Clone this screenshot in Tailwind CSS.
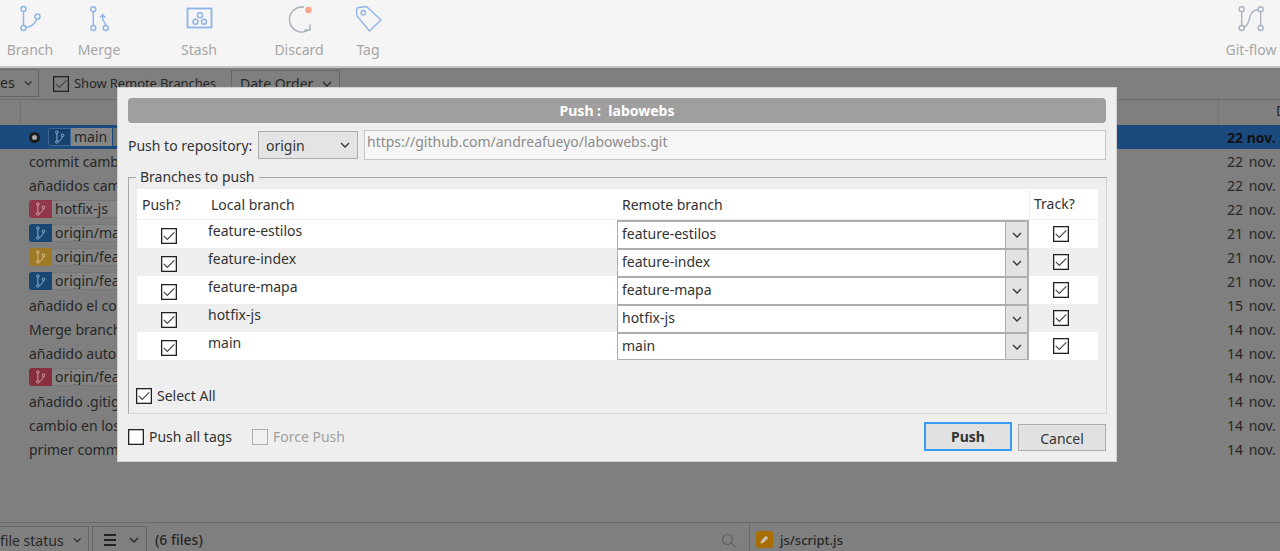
<!DOCTYPE html>
<html lang="es">
<head>
    <meta charset="UTF-8">
    <title>Push : labowebs</title>
    <script src="https://cdn.jsdelivr.net/npm/@tailwindcss/browser@4"></script>
</head>
<body class="h-[551px] w-[1280px] overflow-hidden flex flex-col bg-[#7f7f7f] font-['Noto_Sans',sans-serif] text-[14px] text-[#333]">

<!-- shared icons -->
<svg class="hidden">
    <symbol id="chev" viewBox="0 0 10 6"><path d="M1 1l4 4 4-4" fill="none" stroke="currentColor" stroke-width="1.3"/></symbol>
    <symbol id="box" viewBox="0 0 16 16"><rect x=".65" y=".65" width="14.7" height="14.7" fill="none" stroke="#222" stroke-width="1.3"/></symbol>
    <symbol id="check" viewBox="0 0 16 16"><rect x=".65" y=".65" width="14.7" height="14.7" fill="none" stroke="#222" stroke-width="1.3"/><path d="M2.800 7.800l3.500 3.500 7-7" fill="none" stroke="#444" stroke-width="1.2"/></symbol>
    <symbol id="branch" viewBox="0 0 12 16"><g fill="none" stroke="currentColor" stroke-width="1.1"><circle cx="3" cy="2.500" r="1.500"/><circle cx="3" cy="13.500" r="1.500"/><circle cx="9.500" cy="6" r="1.500"/><path d="M3 4v8M4.400 13C7 12.500 8.800 10 9.200 7.500"/></g></symbol>
</svg>

<!-- Toolbar -->
<header class="h-[68px] shrink-0 flex gap-[9px] bg-[#f5f5f5] border-b-2 border-[#c4c4c4] text-[#a6a6a6]">
    <div class="w-[60px] flex flex-col items-center">
        <svg class="mt-[4px] h-[32px] w-[32px] text-[#8fb4e6]" viewBox="0 0 32 32" fill="none" stroke="currentColor" stroke-width="1.4"><circle cx="9.500" cy="5" r="2.500"/><circle cx="9.500" cy="24" r="2.500"/><circle cx="23.500" cy="12.500" r="2.500"/><path d="M9.500 7.500v14M12 23.500c5-.5 9-4 11-8.500"/></svg>
        <span class="mt-[3px]">Branch</span>
    </div>
    <div class="w-[60px] flex flex-col items-center">
        <svg class="mt-[4px] h-[32px] w-[32px] text-[#8fb4e6]" viewBox="0 0 32 32" fill="none" stroke="currentColor" stroke-width="1.4"><circle cx="10.300" cy="5.300" r="2.500"/><circle cx="10.300" cy="24" r="2.500"/><circle cx="22.700" cy="24" r="2.500"/><path d="M10.300 7.800v13.700M22.700 21.500c0-3-3-4-3-6.500V11M17.200 13.500l2.500-3 2.500 3"/></svg>
        <span class="mt-[3px]">Merge</span>
    </div>
    <div class="w-[60px] ml-[31px] flex flex-col items-center">
        <svg class="mt-[4px] h-[32px] w-[32px] text-[#8fb4e6]" viewBox="0 0 32 32" fill="none" stroke="currentColor" stroke-width="1.4"><rect x="4.500" y="4.500" width="24" height="19" stroke-width="1.800"/><circle cx="17" cy="11.300" r="2.500"/><circle cx="12.500" cy="17.700" r="2.500"/><circle cx="21" cy="17.700" r="2.500"/></svg>
        <span class="mt-[3px]">Stash</span>
    </div>
    <div class="w-[60px] ml-[31px] flex flex-col items-center">
        <svg class="mt-[4px] h-[32px] w-[32px]" viewBox="0 0 32 32" fill="none" stroke="#a9b0ba" stroke-width="1.4"><path d="M21 3.200A12.500 12.500 0 1 0 26.500 25.500M27 20.500v5.500h-5.500"/><circle cx="25.500" cy="6" r="3.200" fill="#f9a391" stroke="none"/></svg>
        <span class="mt-[3px]">Discard</span>
    </div>
    <div class="w-[60px] flex flex-col items-center">
        <svg class="mt-[4px] h-[32px] w-[32px] text-[#8fb4e6]" viewBox="0 0 32 32" fill="none" stroke="currentColor" stroke-width="1.4"><path d="M4.500 6Q4.500 4 6.500 3.500L14.500 2.500 29 16 17.500 27 5 12z"/><circle cx="11.300" cy="8.700" r="2.200"/></svg>
        <span class="mt-[3px]">Tag</span>
    </div>
    <div class="w-[58px] ml-auto flex flex-col items-center">
        <svg class="mt-[4px] h-[32px] w-[32px] text-[#a9b3c2]" viewBox="0 0 32 32" fill="none" stroke="currentColor" stroke-width="1.4"><circle cx="6.700" cy="5.300" r="2.500"/><circle cx="6.700" cy="24" r="2.500"/><circle cx="25.700" cy="5.300" r="2.500"/><circle cx="25.700" cy="24" r="2.500"/><path d="M6.700 7.800v13.700M25.700 7.800v13.700M9 23c8-2 2-16 14.500-17.500"/></svg>
        <span class="mt-[3px]">Git-flow</span>
    </div>
</header>

<!-- Main (dimmed behind the dialog) -->
<main class="relative flex-1 flex flex-col min-h-0 text-[#272727]">
    <div class="h-[31px] shrink-0 flex items-center">
        <div class="h-[28px] w-[39px] -mt-[2px] border border-[#666] border-l-0 flex items-center justify-end gap-[9px] pr-[6px]">
            <span>es</span>
            <svg class="h-[6px] w-[10px]"><use href="#chev"/></svg>
        </div>
        <svg class="ml-[14px] h-[16px] w-[16px]"><use href="#check"/></svg>
        <span class="ml-[5px] w-[157px] whitespace-nowrap text-[13px] tracking-[-0.1px]">Show Remote Branches</span>
        <div class="h-[28px] w-[109px] border border-[#666] flex items-center justify-between pl-[8px] pr-[7px]">
            <span>Date Order</span>
            <svg class="h-[6px] w-[10px]"><use href="#chev"/></svg>
        </div>
    </div>

    <div class="h-[26px] shrink-0 flex border-t border-[#6b6b6b]">
        <div class="w-[21px] shrink-0 border-r border-[#737373]"></div>
        <div class="w-[1198px] shrink-0 border-r border-[#737373]"></div>
        <span class="ml-[57px] shrink-0 whitespace-nowrap">Date</span>
    </div>

    <div class="flex-1 min-h-0">
        <div class="h-[24px] flex items-center bg-[#1b4b7e]">
            <span class="ml-[29px] h-[5px] w-[5px] box-content border-[3px] border-[#1c1c1c] rounded-full bg-[#aaa]"></span>
            <span class="ml-[8px] h-[18px] w-[23px] rounded-l-[3px] border border-[#3a6794] bg-[#17406c] text-[#8fb0d2] flex items-center justify-center"><svg class="h-[14px] w-[11px]"><use href="#branch"/></svg></span>
            <span class="h-[18px] w-[41px] pl-[3px] leading-[17px] bg-[#858585]">main</span>
            <span class="ml-[1px] h-[18px] w-[20px] bg-[#6f6f6f]"></span>
            <span class="ml-auto w-[53px] font-bold text-[#111] whitespace-nowrap overflow-hidden">22 nov. 2021</span>
        </div>
        <div class="h-[24px] flex items-center"><span class="ml-[29px]">commit cambios</span><span class="ml-auto w-[53px] whitespace-nowrap overflow-hidden [word-spacing:2px]">22 nov. 2021</span></div>
        <div class="h-[24px] flex items-center"><span class="ml-[29px]">añadidos cambios</span><span class="ml-auto w-[53px] whitespace-nowrap overflow-hidden [word-spacing:2px]">22 nov. 2021</span></div>
        <div class="h-[24px] flex items-center"><span class="ml-[29px] h-[18px] w-[23px] rounded-l-[3px] bg-[#92364b] text-[#d6a6b0] flex items-center justify-center"><svg class="h-[14px] w-[11px]"><use href="#branch"/></svg></span><span class="h-[18px] w-[70px] pl-[3px] leading-[16px] border-y border-[#777] bg-[#858585] whitespace-nowrap">hotfix-js</span><span class="ml-auto w-[53px] whitespace-nowrap overflow-hidden [word-spacing:2px]">22 nov. 2021</span></div>
        <div class="h-[24px] flex items-center"><span class="ml-[29px] h-[18px] w-[23px] rounded-l-[3px] bg-[#1a4673] text-[#8fb0d2] flex items-center justify-center"><svg class="h-[14px] w-[11px]"><use href="#branch"/></svg></span><span class="h-[18px] w-[70px] pl-[3px] leading-[16px] border-y border-[#777] bg-[#858585] whitespace-nowrap overflow-hidden">origin/main</span><span class="ml-auto w-[53px] whitespace-nowrap overflow-hidden [word-spacing:2px]">21 nov. 2021</span></div>
        <div class="h-[24px] flex items-center"><span class="ml-[29px] h-[18px] w-[23px] rounded-l-[3px] bg-[#9c7a26] text-[#d4c08f] flex items-center justify-center"><svg class="h-[14px] w-[11px]"><use href="#branch"/></svg></span><span class="h-[18px] w-[70px] pl-[3px] leading-[16px] border-y border-[#777] bg-[#858585] whitespace-nowrap overflow-hidden">origin/feature</span><span class="ml-auto w-[53px] whitespace-nowrap overflow-hidden [word-spacing:2px]">21 nov. 2021</span></div>
        <div class="h-[24px] flex items-center"><span class="ml-[29px] h-[18px] w-[23px] rounded-l-[3px] bg-[#1a4673] text-[#8fb0d2] flex items-center justify-center"><svg class="h-[14px] w-[11px]"><use href="#branch"/></svg></span><span class="h-[18px] w-[70px] pl-[3px] leading-[16px] border-y border-[#777] bg-[#858585] whitespace-nowrap overflow-hidden">origin/feature</span><span class="ml-auto w-[53px] whitespace-nowrap overflow-hidden [word-spacing:2px]">21 nov. 2021</span></div>
        <div class="h-[24px] flex items-center"><span class="ml-[29px]">añadido el codigo</span><span class="ml-auto w-[53px] whitespace-nowrap overflow-hidden [word-spacing:2px]">15 nov. 2021</span></div>
        <div class="h-[24px] flex items-center"><span class="ml-[29px]">Merge branch</span><span class="ml-auto w-[53px] whitespace-nowrap overflow-hidden [word-spacing:2px]">14 nov. 2021</span></div>
        <div class="h-[24px] flex items-center"><span class="ml-[29px]">añadido autor</span><span class="ml-auto w-[53px] whitespace-nowrap overflow-hidden [word-spacing:2px]">14 nov. 2021</span></div>
        <div class="h-[24px] flex items-center"><span class="ml-[29px] h-[18px] w-[23px] rounded-l-[3px] bg-[#86303f] text-[#cfa0aa] flex items-center justify-center"><svg class="h-[14px] w-[11px]"><use href="#branch"/></svg></span><span class="h-[18px] w-[70px] pl-[3px] leading-[16px] border-y border-[#777] bg-[#858585] whitespace-nowrap overflow-hidden">origin/feature</span><span class="ml-auto w-[53px] whitespace-nowrap overflow-hidden [word-spacing:2px]">14 nov. 2021</span></div>
        <div class="h-[24px] flex items-center"><span class="ml-[29px]">añadido .gitignore</span><span class="ml-auto w-[53px] whitespace-nowrap overflow-hidden [word-spacing:2px]">14 nov. 2021</span></div>
        <div class="h-[24px] flex items-center"><span class="ml-[29px]">cambio en los</span><span class="ml-auto w-[53px] whitespace-nowrap overflow-hidden [word-spacing:2px]">14 nov. 2021</span></div>
        <div class="h-[24px] flex items-center"><span class="ml-[29px]">primer commit</span><span class="ml-auto w-[53px] whitespace-nowrap overflow-hidden [word-spacing:2px]">14 nov. 2021</span></div>
    </div>

    <footer class="h-[29px] shrink-0 flex items-start pt-[3px] overflow-hidden border-t border-[#6b6b6b]">
        <div class="h-[28px] w-[89px] shrink-0 border-y border-r border-[#666] flex items-center justify-end gap-[9px] pr-[7px] whitespace-nowrap">
            <span>file status</span>
            <svg class="h-[6px] w-[10px]"><use href="#chev"/></svg>
        </div>
        <div class="ml-[3px] h-[28px] w-[55px] shrink-0 border border-[#666] flex items-center justify-between pl-[11px] pr-[7px]">
            <span class="h-[12px] w-[12px] border-y-2 border-[#222] flex items-center"><span class="h-[2px] w-full bg-[#222]"></span></span>
            <svg class="h-[6px] w-[10px]"><use href="#chev"/></svg>
        </div>
        <span class="ml-[8px] w-[566px] shrink-0 font-medium leading-[28px]">(6 files)</span>
        <svg class="mt-[7px] h-[16px] w-[16px] shrink-0 text-[#5f5f5f]" viewBox="0 0 16 16" fill="none" stroke="currentColor" stroke-width="1.2"><circle cx="6.500" cy="6.500" r="5"/><path d="M10.200 10.200l5 5"/></svg>
        <div class="ml-[12px] -mt-[3px] h-[29px] w-[7px] shrink-0 border-l border-[#6b6b6b]"></div>
        <span class="mt-[5px] h-[17px] w-[17px] shrink-0 rounded-[3px] bg-[#a86f00] flex items-center justify-center"><svg class="h-[11px] w-[11px]" viewBox="0 0 11 11"><path d="M1.500 9.500l.6-2.800L7 1.800l2.200 2.200-4.900 4.900z" fill="#c9c2b0"/></svg></span>
        <span class="ml-[7px] text-[13px] font-medium leading-[28px]">js/script.js</span>
    </footer>

    <!-- Push dialog -->
    <section class="absolute left-[117px] top-[19px] h-[375px] w-[1000px] border border-[#d0d0d0] bg-[#eeeeee] px-[10px] pt-[10px] text-[#333]">
        <h2 class="h-[25px] rounded-[4px] bg-[#9f9f9f] text-center font-bold leading-[25px] text-white">Push :&nbsp; labowebs</h2>

        <div class="mt-[7px] flex h-[30px] items-center">
            <span class="w-[130px] whitespace-nowrap">Push to repository:</span>
            <div class="h-[28px] w-[100px] border border-[#adadad] bg-[#e4e4e4] flex items-center justify-between pl-[7px] pr-[7px]">
                <span>origin</span>
                <svg class="h-[6px] w-[10px]"><use href="#chev"/></svg>
            </div>
            <div class="ml-[6px] h-[30px] flex-1 border border-[#c8c8c8] bg-[#f6f6f6] pl-[2px] leading-[21px] text-[#8c8c8c]">https://github.com/andreafueyo/labowebs.git</div>
        </div>

        <fieldset class="mt-[7px] h-[247px] border border-[#a8a8a8] border-r-[#d4d4d4] border-b-[#d4d4d4] px-[8px]">
            <legend class="-ml-[1px] px-[4px] h-[20px] leading-[20px]">Branches to push</legend>

            <div class="mt-[2px] w-[961px] bg-white">
                <div class="flex h-[31px] items-center border-b border-[#eee]">
                    <span class="w-[74px] pl-[5px]">Push?</span>
                    <span class="w-[406px]">Local branch</span>
                    <span class="w-[412px] pl-[5px]">Remote branch</span>
                    <span class="h-full flex-1 border-l border-[#eee] pl-[4px] leading-[30px]">Track?</span>
                </div>

                <div class="flex h-[28px]">
                    <div class="w-[71px] pl-[24px] pt-[8px]"><svg class="h-[16px] w-[16px] bg-white"><use href="#check"/></svg></div>
                    <span class="w-[409px] leading-[22px]">feature-estilos</span>
                    <div class="w-[412px] border-t-2 border-x border-r-2 border-[#adadad] bg-white flex">
                        <span class="flex-1 pl-[4px] leading-[24px]">feature-estilos</span>
                        <span class="w-[22px] border-l border-[#adadad] bg-[#e2e2e2] flex items-center justify-center"><svg class="h-[6px] w-[10px]"><use href="#chev"/></svg></span>
                    </div>
                    <div class="pl-[24px] pt-[6px]"><svg class="h-[16px] w-[16px] bg-white"><use href="#check"/></svg></div>
                </div>
                <div class="flex h-[28px] bg-[#eeeeee]">
                    <div class="w-[71px] pl-[24px] pt-[8px]"><svg class="h-[16px] w-[16px] bg-white"><use href="#check"/></svg></div>
                    <span class="w-[409px] leading-[22px]">feature-index</span>
                    <div class="w-[412px] border-t-2 border-x border-r-2 border-[#adadad] bg-white flex">
                        <span class="flex-1 pl-[4px] leading-[24px]">feature-index</span>
                        <span class="w-[22px] border-l border-[#adadad] bg-[#e2e2e2] flex items-center justify-center"><svg class="h-[6px] w-[10px]"><use href="#chev"/></svg></span>
                    </div>
                    <div class="pl-[24px] pt-[6px]"><svg class="h-[16px] w-[16px] bg-white"><use href="#check"/></svg></div>
                </div>
                <div class="flex h-[28px]">
                    <div class="w-[71px] pl-[24px] pt-[8px]"><svg class="h-[16px] w-[16px] bg-white"><use href="#check"/></svg></div>
                    <span class="w-[409px] leading-[22px]">feature-mapa</span>
                    <div class="w-[412px] border-t-2 border-x border-r-2 border-[#adadad] bg-white flex">
                        <span class="flex-1 pl-[4px] leading-[24px]">feature-mapa</span>
                        <span class="w-[22px] border-l border-[#adadad] bg-[#e2e2e2] flex items-center justify-center"><svg class="h-[6px] w-[10px]"><use href="#chev"/></svg></span>
                    </div>
                    <div class="pl-[24px] pt-[6px]"><svg class="h-[16px] w-[16px] bg-white"><use href="#check"/></svg></div>
                </div>
                <div class="flex h-[28px] bg-[#eeeeee]">
                    <div class="w-[71px] pl-[24px] pt-[8px]"><svg class="h-[16px] w-[16px] bg-white"><use href="#check"/></svg></div>
                    <span class="w-[409px] leading-[22px]">hotfix-js</span>
                    <div class="w-[412px] border-t-2 border-x border-r-2 border-[#adadad] bg-white flex">
                        <span class="flex-1 pl-[4px] leading-[24px]">hotfix-js</span>
                        <span class="w-[22px] border-l border-[#adadad] bg-[#e2e2e2] flex items-center justify-center"><svg class="h-[6px] w-[10px]"><use href="#chev"/></svg></span>
                    </div>
                    <div class="pl-[24px] pt-[6px]"><svg class="h-[16px] w-[16px] bg-white"><use href="#check"/></svg></div>
                </div>
                <div class="flex h-[28px]">
                    <div class="w-[71px] pl-[24px] pt-[8px]"><svg class="h-[16px] w-[16px] bg-white"><use href="#check"/></svg></div>
                    <span class="w-[409px] leading-[22px]">main</span>
                    <div class="w-[412px] border-t-2 border-x border-r-2 border-b border-[#adadad] bg-white flex">
                        <span class="flex-1 pl-[4px] leading-[24px]">main</span>
                        <span class="w-[22px] border-l border-[#adadad] bg-[#e2e2e2] flex items-center justify-center"><svg class="h-[6px] w-[10px]"><use href="#chev"/></svg></span>
                    </div>
                    <div class="pl-[24px] pt-[6px]"><svg class="h-[16px] w-[16px] bg-white"><use href="#check"/></svg></div>
                </div>
            </div>

            <label class="mt-[25px] -ml-[1px] flex items-center gap-[5px]">
                <svg class="h-[16px] w-[16px] bg-white"><use href="#check"/></svg>
                <span>Select All</span>
            </label>
        </fieldset>

        <div class="mt-[8px] flex items-start">
            <label class="mt-[4px] flex w-[124px] items-center gap-[5px] whitespace-nowrap">
                <svg class="h-[16px] w-[16px] bg-white"><use href="#box"/></svg>
                <span>Push all tags</span>
            </label>
            <label class="mt-[4px] flex items-center gap-[5px] text-[#a0a0a0]">
                <span class="h-[16px] w-[16px] border border-[#adadad] bg-[#f0f0f0]"></span>
                <span>Force Push</span>
            </label>
            <button class="ml-auto h-[29px] w-[88px] border-2 border-[#3b9bf5] bg-[#e1e1e1] font-bold">Push</button>
            <button class="ml-[6px] mt-[2px] h-[27px] w-[88px] border border-[#adadad] bg-[#e1e1e1] pt-[2px]">Cancel</button>
        </div>
    </section>
</main>
</body>
</html>
